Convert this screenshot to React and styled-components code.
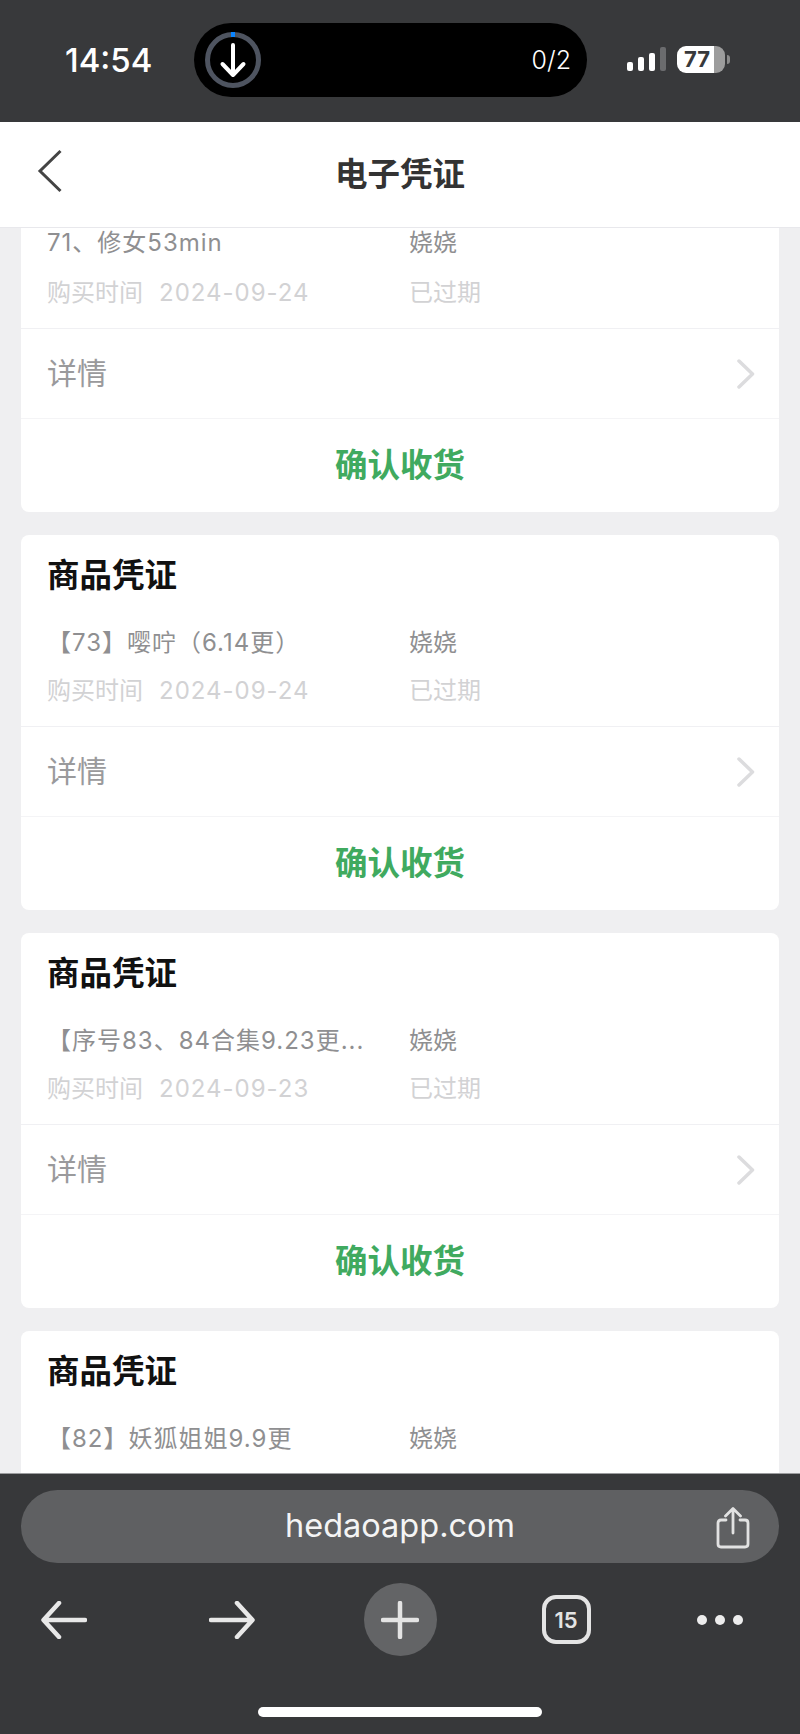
import React from 'react';
import styled, { createGlobalStyle } from 'styled-components';

const GlobalStyle = createGlobalStyle`
  html, body {
    margin: 0;
    padding: 0;
    background: #efeff1;
  }
  * {
    box-sizing: border-box;
  }
`;

const CJK = `"Liberation Sans", "Noto Sans CJK SC", sans-serif`;

const Page = styled.div`
  width: 800px;
  height: 1734px;
  display: flex;
  flex-direction: column;
  overflow: hidden;
  font-family: ${CJK};
`;

const StatusBar = styled.div`
  height: 122px;
  flex: none;
  background: #38393b;
  display: flex;
  align-items: flex-start;
  padding: 23px 0 0 65px;
`;

const Clock = styled.div`
  width: 129px;
  height: 74px;
  line-height: 74px;
  font-family: Inter, sans-serif;
  font-size: 33px;
  font-weight: 500;
  color: #fff;
`;

const Island = styled.div`
  width: 393px;
  height: 74px;
  border-radius: 37px;
  background: #000;
  display: flex;
  align-items: center;
  justify-content: space-between;
  padding: 0 16px 0 10px;
  color: #fff;
`;

const Counter = styled.span`
  font-family: Inter, sans-serif;
  font-size: 25px;
  font-weight: 300;
`;

const Signal = styled.div`
  margin: 24px 0 0 40px;
  height: 24px;
  display: flex;
  align-items: flex-end;
  gap: 5px;
`;

const SignalBar = styled.span`
  width: 6px;
  height: ${p => p.$h}px;
  border-radius: 2px;
  background: ${p => (p.$off ? '#6b6c6e' : '#fff')};
`;

const Battery = styled.div`
  margin: 23px 0 0 11px;
  width: 48px;
  height: 27px;
  border-radius: 9px;
  background: linear-gradient(to right, #fff 77%, #9c9c9c 77%);
  color: #38393b;
  font-family: Inter, sans-serif;
  font-size: 22px;
  font-weight: 700;
  line-height: 27px;
  padding-left: 7px;
`;

const BatteryNub = styled.span`
  margin: 32px 0 0 2px;
  width: 3px;
  height: 9px;
  border-radius: 0 3px 3px 0;
  background: #8a8a8a;
`;

const NavBar = styled.div`
  height: 106px;
  flex: none;
  background: #fff;
  border-bottom: 1px solid #e8e8ec;
  padding-bottom: 6px;
  display: flex;
  align-items: center;
  justify-content: center;
  position: relative;
`;

const BackButton = styled.div`
  position: absolute;
  left: 37px;
  top: 27px;
  line-height: 0;
`;

const NavTitle = styled.div`
  font-size: 32.5px;
  font-weight: 700;
  color: #333;
`;

const List = styled.div`
  flex: 1;
  min-height: 0;
  overflow: hidden;
  padding: 0 21px;
  display: flex;
  flex-direction: column;
  gap: 23px;
`;

const Card = styled.div`
  flex: ${p => (p.$tail ? 1 : 'none')};
  background: #fff;
  border-radius: ${p => (p.$cut ? '0 0 8px 8px' : p.$tail ? '8px 8px 0 0' : '8px')};
`;

const Info = styled.div`
  height: ${p => (p.$cut ? 103 : 192)}px;
  padding: 0 26px;
  border-bottom: 1px solid #f0f0f3;
`;

const TailInfo = styled.div`
  padding: 0 26px;
`;

const CardTitle = styled.div`
  padding-top: 21px;
  height: 61px;
  line-height: 40px;
  font-size: 32.5px;
  font-weight: 700;
  color: #111;
`;

const InfoRow = styled.div`
  display: flex;
  height: 34px;
  line-height: 34px;
  font-family: Inter, "Noto Sans CJK SC", sans-serif;
  font-size: 24px;
  margin-top: ${p => p.$top}px;
  color: ${p => (p.$muted ? '#d2d2d4' : '#8f8f91')};
`;

const InfoMain = styled.div`
  width: 362px;
  flex: none;
  white-space: nowrap;
`;

const ProductName = styled.span`
  letter-spacing: 1px;
`;

const PurchaseDate = styled.span`
  margin-left: 16px;
  letter-spacing: 1px;
`;

const DetailRow = styled.div`
  height: 90px;
  padding: 0 24px 0 26px;
  border-bottom: 1px solid #f4f4f6;
  display: flex;
  align-items: center;
  justify-content: space-between;
  font-size: 30px;
  color: #9a9a9c;
`;

const DetailLabel = styled.span`
  padding-bottom: 5px;
`;

const ConfirmRow = styled.div`
  height: 93px;
  padding-bottom: 6px;
  display: flex;
  align-items: center;
  justify-content: center;
  font-size: 32.5px;
  font-weight: 700;
  color: #40aa5f;
`;

const BottomBar = styled.div`
  height: 261px;
  flex: none;
  background: #37383a;
  border-top: 1px solid #9b9c9e;
  padding: 16px 21px 0;
  position: relative;
`;

const UrlPill = styled.div`
  height: 73px;
  border-radius: 37px;
  background: #5f6062;
  padding-bottom: 3px;
  display: flex;
  align-items: center;
  justify-content: center;
  position: relative;
  font-family: Inter, sans-serif;
  font-size: 32.5px;
  color: #f4f4f4;
`;

const ShareIcon = styled.div`
  position: absolute;
  right: 29px;
  top: 17px;
  line-height: 0;
`;

const Toolbar = styled.div`
  margin: 20px -21px 0;
  display: grid;
  grid-template-columns: 128px 208px 128px 204px 104px;
  align-items: center;
  justify-items: center;
  height: 73px;
`;

const PlusButton = styled.div`
  width: 73px;
  height: 73px;
  border-radius: 50%;
  background: #636466;
  display: flex;
  align-items: center;
  justify-content: center;
`;

const TabCount = styled.div`
  width: 49px;
  height: 49px;
  border: 4px solid #e4e4e4;
  border-radius: 14px;
  display: flex;
  align-items: center;
  justify-content: center;
  font-family: Inter, sans-serif;
  font-size: 22px;
  font-weight: 600;
  color: #e4e4e4;
`;

const Dots = styled.div`
  display: flex;
  gap: 8px;
`;

const Dot = styled.span`
  width: 10px;
  height: 10px;
  border-radius: 50%;
  background: #ededed;
`;

const HomeBar = styled.div`
  position: absolute;
  left: 258px;
  bottom: 17px;
  width: 284px;
  height: 10px;
  border-radius: 5px;
  background: #fff;
`;

const DownloadIcon = () => (
  <svg width="58" height="58" viewBox="0 0 58 58" fill="none">
    <circle cx="29" cy="29" r="25.5" stroke="#4e5460" strokeWidth="5" />
    <path d="M27 3.5 h4" stroke="#0a84ff" strokeWidth="5" />
    <path d="M29 14 V43 M18.5 33 L29 44 L39.5 33" stroke="#fff" strokeWidth="4" strokeLinecap="round" strokeLinejoin="round" />
  </svg>
);

const BackIcon = () => (
  <svg width="26" height="44" viewBox="0 0 26 44" fill="none">
    <path d="M23.5 2 L3 22 L23.5 42" stroke="#444" strokeWidth="3" />
  </svg>
);

const ChevronIcon = () => (
  <svg width="18" height="30" viewBox="0 0 18 30" fill="none">
    <path d="M2 2 L15.5 15 L2 28" stroke="#dcdcde" strokeWidth="3.5" strokeLinecap="round" strokeLinejoin="round" />
  </svg>
);

const ShareGlyph = () => (
  <svg width="34" height="42" viewBox="0 0 34 42" fill="none" stroke="#e2e2e2" strokeWidth="2.8" strokeLinecap="round" strokeLinejoin="round">
    <path d="M10 13 H5 Q2 13 2 16 V37 Q2 40 5 40 H29 Q32 40 32 37 V16 Q32 13 29 13 H24" />
    <path d="M17 26 V2 M9.5 9 L17 1.5 L24.5 9" />
  </svg>
);

const ArrowIcon = ({ flip }) => (
  <svg width="46" height="38" viewBox="0 0 46 38" fill="none" style={flip ? { transform: 'scaleX(-1)' } : undefined}>
    <path d="M44 19 H3 M18 2 L2.5 19 L18 36" stroke="#e8e8e8" strokeWidth="4.5" strokeLinecap="round" strokeLinejoin="round" />
  </svg>
);

const PlusIcon = () => (
  <svg width="38" height="38" viewBox="0 0 38 38" fill="none">
    <path d="M19 2 V36 M2 19 H36" stroke="#e4e4e4" strokeWidth="4.5" strokeLinecap="round" />
  </svg>
);

const cards = [
  { id: 1, cut: true, name: '71、修女53min', date: '2024-09-24' },
  { id: 2, name: '【73】嘤咛（6.14更）', date: '2024-09-24' },
  { id: 3, name: '【序号83、84合集9.23更...', date: '2024-09-23' },
];

const App = () => (
  <Page>
    <GlobalStyle />
    <StatusBar>
      <Clock>14:54</Clock>
      <Island>
        <DownloadIcon />
        <Counter>0/2</Counter>
      </Island>
      <Signal>
        <SignalBar $h={9} />
        <SignalBar $h={14} />
        <SignalBar $h={18} />
        <SignalBar $h={24} $off />
      </Signal>
      <Battery>77</Battery>
      <BatteryNub />
    </StatusBar>

    <NavBar>
      <BackButton>
        <BackIcon />
      </BackButton>
      <NavTitle>电子凭证</NavTitle>
    </NavBar>

    <List>
      {cards.map(card => (
        <Card key={card.id} $cut={card.cut}>
          <Info $cut={card.cut}>
            {!card.cut && <CardTitle>商品凭证</CardTitle>}
            <InfoRow $top={card.cut ? -2 : 30}>
              <InfoMain>
                <ProductName>{card.name}</ProductName>
              </InfoMain>
              <span>娆娆</span>
            </InfoRow>
            <InfoRow $top={card.cut ? 16 : 14} $muted>
              <InfoMain>
                购买时间
                <PurchaseDate>{card.date}</PurchaseDate>
              </InfoMain>
              <span>已过期</span>
            </InfoRow>
          </Info>
          <DetailRow>
            <DetailLabel>详情</DetailLabel>
            <ChevronIcon />
          </DetailRow>
          <ConfirmRow>确认收货</ConfirmRow>
        </Card>
      ))}
      {/* the rest of this card is under the browser toolbar */}
      <Card $tail>
        <TailInfo>
          <CardTitle>商品凭证</CardTitle>
          <InfoRow $top={30}>
            <InfoMain>
              <ProductName>【82】妖狐姐姐9.9更</ProductName>
            </InfoMain>
            <span>娆娆</span>
          </InfoRow>
        </TailInfo>
      </Card>
    </List>

    <BottomBar>
      <UrlPill>
        hedaoapp.com
        <ShareIcon>
          <ShareGlyph />
        </ShareIcon>
      </UrlPill>
      <Toolbar>
        <ArrowIcon />
        <ArrowIcon flip />
        <PlusButton>
          <PlusIcon />
        </PlusButton>
        <TabCount>15</TabCount>
        <Dots>
          <Dot />
          <Dot />
          <Dot />
        </Dots>
      </Toolbar>
      <HomeBar />
    </BottomBar>
  </Page>
);

export default App;
